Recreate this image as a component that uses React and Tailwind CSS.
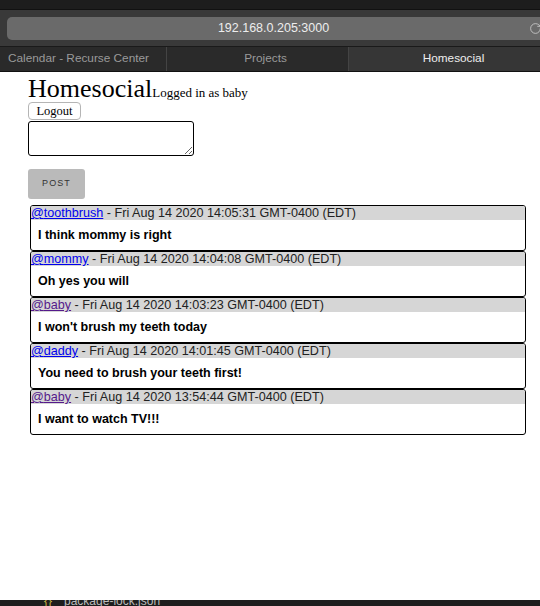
import { RotateCw } from 'lucide-react';

const POSTS = [
  { user: 'toothbrush', date: 'Fri Aug 14 2020 14:05:31 GMT-0400 (EDT)', text: 'I think mommy is right', visited: false },
  { user: 'mommy', date: 'Fri Aug 14 2020 14:04:08 GMT-0400 (EDT)', text: 'Oh yes you will', visited: false },
  { user: 'baby', date: 'Fri Aug 14 2020 14:03:23 GMT-0400 (EDT)', text: "I won't brush my teeth today", visited: true },
  { user: 'daddy', date: 'Fri Aug 14 2020 14:01:45 GMT-0400 (EDT)', text: 'You need to brush your teeth first!', visited: false },
  { user: 'baby', date: 'Fri Aug 14 2020 13:54:44 GMT-0400 (EDT)', text: 'I want to watch TV!!!', visited: true },
];

const TABS = ['Calendar - Recurse Center', 'Projects', 'Homesocial'];

export default function App() {
  return (
    <div className="w-[540px] h-[606px] flex flex-col bg-white overflow-hidden font-['Liberation_Sans',Arial,sans-serif]">
      {/* Browser chrome */}
      <div className="h-[10px] bg-[#1d1d1d] border-b border-[#111]" />
      <div className="h-[36px] bg-[#393939] flex items-center pl-[7px]">
        <div className="relative flex-1 h-[23px] bg-[#6a6a6a] rounded-l-[5px] flex items-center justify-center">
          <span className="text-[12.5px] text-[#ededed]">192.168.0.205:3000</span>
          <RotateCw className="absolute right-[-2px] w-[13px] h-[13px] text-[#cfcfcf]" strokeWidth={1.5} />
        </div>
      </div>
      <div className="h-[26px] flex bg-[#2a2a2a] border-t border-[#1a1a1a] border-b border-b-[#111] text-[11.8px]">
        {TABS.map((t, i) => (
          <div
            key={t}
            className={`flex items-center ${i === 0 ? 'w-[166px] pl-[8px] text-[#9a9a9a]' : i === 1 ? 'w-[182px] justify-center pl-[16px] text-[#9a9a9a] border-l border-[#444]' : 'flex-1 justify-center pl-[18px] text-[#eeeeee] bg-[#363636] border-l border-[#444]'}`}
          >
            {t}
          </div>
        ))}
      </div>

      {/* Page */}
      <div className="flex-1 pl-[28px] pr-[15px] pt-[1px] font-['Liberation_Serif','Times_New_Roman',serif] text-black">
        <div className="flex items-baseline leading-none h-[28px] pt-[3px]">
          <span className="text-[26px]">Homesocial</span>
          <span className="text-[13px]">Logged in as baby</span>
        </div>
        <button className="mt-[1px] h-[18px] w-[53px] border border-[#b5b5b5] rounded-[4px] bg-white text-[12.5px] leading-none flex items-center justify-center">
          Logout
        </button>
        <textarea className="block mt-[1px] w-[166px] h-[35px] border border-black rounded-[3px] resize-y" />
        <button className="mt-[13px] w-[57px] h-[30px] bg-[#bababa] rounded-[3px] text-[9px] tracking-[0.12em] text-[#333] font-['Liberation_Sans',Arial,sans-serif] flex items-center justify-center">
          POST
        </button>
        <div className="mt-[6px] ml-[2px] w-[496px] font-['Liberation_Sans',Arial,sans-serif]">
          {POSTS.map((p, i) => (
            <div key={i} className="h-[46px] border border-black rounded-[3px] overflow-hidden">
              <div className="h-[14px] bg-[#d6d6d6] text-[12.6px] leading-[14px] text-[#222] whitespace-nowrap">
                <a href="#" className={`underline ${p.visited ? 'text-[#551a8b]' : 'text-[#0000ee]'}`}>@{p.user}</a>
                {' - '}{p.date}
              </div>
              <div className="h-[30px] flex items-center pl-[7px] pt-[1px] text-[12.5px] font-bold text-black">
                {p.text}
              </div>
            </div>
          ))}
        </div>
      </div>

      {/* Bottom editor strip */}
      <div className="h-[6px] bg-[#1e1e1e] overflow-hidden flex items-start pl-[44px] gap-[12px] text-[12px] leading-[8px]">
        <span className="text-[#c8b040] -mt-[3px]">{'{}'}</span>
        <span className="text-[#bbbbbb] -mt-[3px]">package-lock.json</span>
      </div>
    </div>
  );
}
